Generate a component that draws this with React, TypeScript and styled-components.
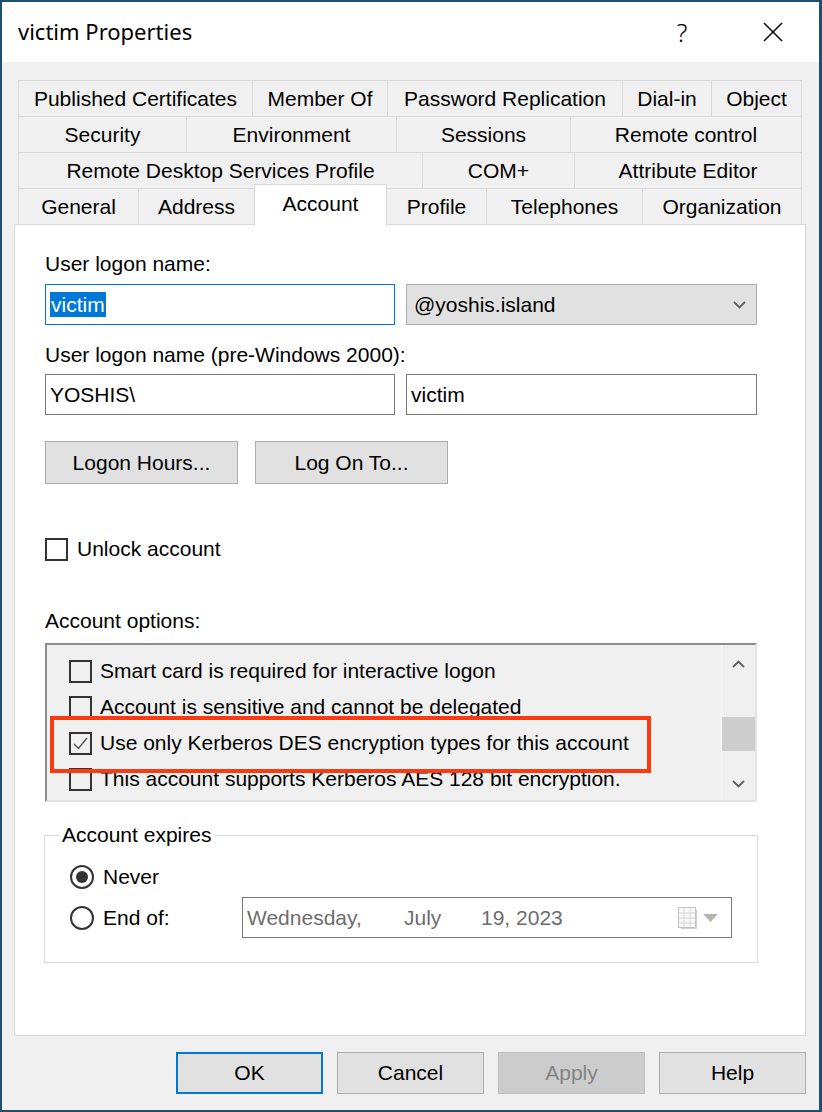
import React from "react";
import styled, { createGlobalStyle } from "styled-components";

const GlobalStyle = createGlobalStyle`
  html, body {
    margin: 0;
    padding: 0;
    background: #ffffff;
  }
  body {
    font-family: "Liberation Sans", Arial, sans-serif;
  }
`;

const Window = styled.div`
  width: 822px;
  height: 1112px;
  box-sizing: border-box;
  border: 2px solid #1d5070;
  border-right-width: 3px;
  display: flex;
  flex-direction: column;
  background: #f0f0f0;
  font-family: "Liberation Sans", Arial, sans-serif;
  font-size: 21px;
  color: #000000;
`;

const TitleBar = styled.div`
  height: 60px;
  flex-shrink: 0;
  background: #ffffff;
  display: flex;
  align-items: center;
  padding: 0 16px 0 16px;
`;

const Title = styled.div`
  flex: 1;
  font-family: "Noto Sans", "Open Sans", sans-serif;
  font-size: 22px;
  padding-bottom: 2px;
`;

const TitleButton = styled.div`
  width: 60px;
  height: 40px;
  display: flex;
  align-items: center;
  justify-content: center;
  font-family: "Noto Sans", sans-serif;
  font-weight: 300;
  font-size: 25px;
  & + & {
    margin-left: 31px;
  }
`;

const Body = styled.div`
  flex: 1;
  display: flex;
  flex-direction: column;
  padding: 18px 13px 0 12px;
`;

const TabStrip = styled.div`
  margin: 0 4px;
  display: flex;
  flex-direction: column;
`;

const TabRow = styled.div`
  display: flex;
  height: 37px;
  & + & {
    margin-top: -1px;
  }
`;

const Tab = styled.div<{ $w: number; $active?: boolean }>`
  width: ${(p) => p.$w}px;
  flex-shrink: 0;
  box-sizing: border-box;
  border: 1px solid #d9d9d9;
  background: ${(p) => (p.$active ? "#ffffff" : "#f0f0f0")};
  display: flex;
  align-items: center;
  justify-content: center;
  white-space: nowrap;
  & + & {
    margin-left: -1px;
  }
  ${(p) =>
    p.$active &&
    `
    position: relative;
    z-index: 2;
    margin-top: -4px;
    height: 42px;
    border-bottom: none;
    padding-bottom: 4px;
  `}
`;

const Panel = styled.div`
  margin-top: -1px;
  height: 812px;
  box-sizing: border-box;
  background: #ffffff;
  border: 1px solid #d9d9d9;
  padding: 27px 48px 0 30px;
  display: flex;
  flex-direction: column;
`;

const Label = styled.div<{ $mt?: number }>`
  line-height: 24px;
  margin-top: ${(p) => p.$mt ?? 0}px;
  white-space: nowrap;
`;

const FieldRow = styled.div<{ $mt: number }>`
  display: flex;
  gap: 11px;
  margin-top: ${(p) => p.$mt}px;
`;

const TextBox = styled.div<{ $focused?: boolean }>`
  width: 350px;
  height: 41px;
  flex-shrink: 0;
  box-sizing: border-box;
  border: 1px solid ${(p) => (p.$focused ? "#0078d7" : "#7a7a7a")};
  background: #ffffff;
  display: flex;
  align-items: center;
  padding-left: 4px;
`;

const Selected = styled.span`
  background: #0078d7;
  color: #ffffff;
  line-height: 25px;
  padding: 0 1px;
`;

const Combo = styled.div`
  flex: 1;
  height: 41px;
  box-sizing: border-box;
  border: 1px solid #adadad;
  background: #e1e1e1;
  display: flex;
  align-items: center;
  justify-content: space-between;
  padding: 0 10px 0 7px;
`;

const ButtonRow = styled.div`
  display: flex;
  gap: 17px;
  margin-top: 26px;
`;

const PushButton = styled.div`
  width: 193px;
  height: 43px;
  box-sizing: border-box;
  border: 1px solid #adadad;
  background: #e1e1e1;
  display: flex;
  align-items: center;
  justify-content: center;
`;

const CheckRow = styled.div<{ $mt?: number; $gap: number }>`
  display: flex;
  align-items: center;
  gap: ${(p) => p.$gap}px;
  margin-top: ${(p) => p.$mt ?? 0}px;
  white-space: nowrap;
`;

const CheckBox = styled.div`
  width: 23px;
  height: 23px;
  flex-shrink: 0;
  box-sizing: border-box;
  border: 2px solid #333333;
  display: flex;
  align-items: center;
  justify-content: center;
`;

const ListBox = styled.div`
  position: relative;
  margin-top: 10px;
  height: 159px;
  box-sizing: border-box;
  border: 2px solid;
  border-color: #8c8c8c #e3e3e3 #e3e3e3 #8c8c8c;
  background: #f0f0f0;
  display: flex;
  overflow: hidden;
`;

const ItemList = styled.div`
  flex: 1;
  display: flex;
  flex-direction: column;
  padding: 8px 0 0 22px;
`;

const Item = styled.div`
  height: 36px;
  flex-shrink: 0;
  display: flex;
  align-items: center;
  gap: 8px;
  white-space: nowrap;
`;

const ScrollBar = styled.div`
  width: 33px;
  flex-shrink: 0;
  border-left: 1px solid #ffffff;
  display: flex;
  flex-direction: column;
`;

const ArrowCell = styled.div<{ $h: number }>`
  height: ${(p) => p.$h}px;
  flex-shrink: 0;
  display: flex;
  align-items: center;
  justify-content: center;
`;

const Thumb = styled.div`
  height: 34px;
  margin-top: 34px;
  background: #cdcdcd;
`;

const Spacer = styled.div`
  flex: 1;
`;

const Highlight = styled.div`
  position: absolute;
  left: 3px;
  top: 71px;
  width: 601px;
  height: 57px;
  box-sizing: border-box;
  border: 4px solid #fa3b12;
  pointer-events: none;
`;

const GroupBox = styled.fieldset`
  margin: 21px 0 0 -1px;
  width: 714px;
  box-sizing: border-box;
  border: 1px solid #dcdcdc;
  padding: 0 0 24px 25px;
`;

const Legend = styled.legend`
  padding: 0 3px;
  margin-left: -11px;
  line-height: 24px;
`;

const RadioRow = styled.div<{ $mt: number; $h: number }>`
  display: flex;
  align-items: center;
  height: ${(p) => p.$h}px;
  margin-top: ${(p) => p.$mt}px;
  gap: 9px;
`;

const Radio = styled.div<{ $checked?: boolean }>`
  width: 24px;
  height: 24px;
  flex-shrink: 0;
  box-sizing: border-box;
  border: 2px solid #333333;
  border-radius: 50%;
  display: flex;
  align-items: center;
  justify-content: center;
  &::after {
    content: "";
    display: ${(p) => (p.$checked ? "block" : "none")};
    width: 12px;
    height: 12px;
    border-radius: 50%;
    background: #333333;
  }
`;

const RadioLabel = styled.span<{ $w?: number }>`
  width: ${(p) => (p.$w ? `${p.$w}px` : "auto")};
  flex-shrink: 0;
`;

const DatePicker = styled.div`
  width: 490px;
  height: 41px;
  box-sizing: border-box;
  border: 1px solid #7a7a7a;
  background: #ffffff;
  color: #6d6d6d;
  display: flex;
  align-items: center;
  padding: 0 13px 0 4px;
  white-space: nowrap;
`;

const DateSeg = styled.span<{ $w?: number }>`
  width: ${(p) => (p.$w ? `${p.$w}px` : "auto")};
  flex-shrink: 0;
`;

const DateIcons = styled.div`
  margin-left: auto;
  display: flex;
  align-items: center;
  gap: 6px;
`;

const Footer = styled.div`
  display: flex;
  justify-content: flex-end;
  gap: 14px;
  margin-top: 16px;
`;

const DialogButton = styled.div<{ $primary?: boolean; $disabled?: boolean }>`
  width: 147px;
  height: 42px;
  box-sizing: border-box;
  border: ${(p) => (p.$primary ? "2px solid #0078d7" : `1px solid ${p.$disabled ? "#bfbfbf" : "#adadad"}`)};
  background: ${(p) => (p.$disabled ? "#cccccc" : "#e1e1e1")};
  color: ${(p) => (p.$disabled ? "#838383" : "#000000")};
  display: flex;
  align-items: center;
  justify-content: center;
`;

const tabRows: { label: string; w: number; active?: boolean }[][] = [
  [
    { label: "Published Certificates", w: 235 },
    { label: "Member Of", w: 136 },
    { label: "Password Replication", w: 236 },
    { label: "Dial-in", w: 90 },
    { label: "Object", w: 91 },
  ],
  [
    { label: "Security", w: 169 },
    { label: "Environment", w: 211 },
    { label: "Sessions", w: 175 },
    { label: "Remote control", w: 232 },
  ],
  [
    { label: "Remote Desktop Services Profile", w: 405 },
    { label: "COM+", w: 153 },
    { label: "Attribute Editor", w: 228 },
  ],
  [
    { label: "General", w: 121 },
    { label: "Address", w: 117 },
    { label: "Account", w: 133, active: true },
    { label: "Profile", w: 101 },
    { label: "Telephones", w: 157 },
    { label: "Organization", w: 160 },
  ],
];

const accountOptions = [
  { label: "Smart card is required for interactive logon", checked: false },
  { label: "Account is sensitive and cannot be delegated", checked: false },
  { label: "Use only Kerberos DES encryption types for this account", checked: true },
  { label: "This account supports Kerberos AES 128 bit encryption.", checked: false },
];

const Chevron = ({ up }: { up?: boolean }) => (
  <svg width="13" height="8" viewBox="0 0 13 8">
    <polyline
      points={up ? "1,7 6.5,1.5 12,7" : "1,1 6.5,6.5 12,1"}
      fill="none"
      stroke="#606060"
      strokeWidth="1.8"
    />
  </svg>
);

const CheckMark = () => (
  <svg width="19" height="19" viewBox="0 0 19 19">
    <polyline points="3,10 7.5,14.5 16,4" fill="none" stroke="#555555" strokeWidth="1.4" />
  </svg>
);

const CalendarIcon = () => (
  <svg width="19" height="22" viewBox="0 0 19 22">
    <rect x="0.5" y="0.5" width="17" height="20" fill="#f8f8f8" stroke="#c4c4c4" />
    <line x1="1" y1="6" x2="17" y2="6" stroke="#d6d6d6" />
    <line x1="1" y1="11" x2="17" y2="11" stroke="#d6d6d6" />
    <line x1="1" y1="16" x2="17" y2="16" stroke="#d6d6d6" />
    <line x1="6" y1="1" x2="6" y2="20" stroke="#d6d6d6" />
    <line x1="12" y1="1" x2="12" y2="20" stroke="#d6d6d6" />
    <polyline points="18.5,3 18.5,21.5 3,21.5" fill="none" stroke="#d0d0d0" />
  </svg>
);

const DropTriangle = () => (
  <svg width="15" height="8" viewBox="0 0 15 8">
    <polygon points="0,0 15,0 7.5,8" fill="#b4b4aa" />
  </svg>
);

const App = () => {
  return (
    <>
      <GlobalStyle />
      <Window>
        <TitleBar>
          <Title>victim Properties</Title>
          <TitleButton>?</TitleButton>
          <TitleButton>
            <svg width="20" height="20" viewBox="0 0 20 20">
              <line x1="1" y1="1" x2="19" y2="19" stroke="#000" strokeWidth="1.5" />
              <line x1="19" y1="1" x2="1" y2="19" stroke="#000" strokeWidth="1.5" />
            </svg>
          </TitleButton>
        </TitleBar>
        <Body>
          <TabStrip>
            {tabRows.map((row, i) => (
              <TabRow key={i}>
                {row.map((t) => (
                  <Tab key={t.label} $w={t.w} $active={t.active}>
                    {t.label}
                  </Tab>
                ))}
              </TabRow>
            ))}
          </TabStrip>
          <Panel>
            <Label>User logon name:</Label>
            <FieldRow $mt={8}>
              <TextBox $focused>
                <Selected>victim</Selected>
              </TextBox>
              <Combo>
                <span>@yoshis.island</span>
                <Chevron />
              </Combo>
            </FieldRow>
            <Label $mt={18}>User logon name (pre-Windows 2000):</Label>
            <FieldRow $mt={7}>
              <TextBox>YOSHIS\</TextBox>
              <TextBox style={{ flex: 1 }}>victim</TextBox>
            </FieldRow>
            <ButtonRow>
              <PushButton>Logon Hours...</PushButton>
              <PushButton>Log On To...</PushButton>
            </ButtonRow>
            <CheckRow $mt={53} $gap={9}>
              <CheckBox />
              <span>Unlock account</span>
            </CheckRow>
            <Label $mt={48}>Account options:</Label>
            <ListBox>
              <ItemList>
                {accountOptions.map((o) => (
                  <Item key={o.label}>
                    <CheckBox>{o.checked && <CheckMark />}</CheckBox>
                    <span>{o.label}</span>
                  </Item>
                ))}
              </ItemList>
              <ScrollBar>
                <ArrowCell $h={38}>
                  <Chevron up />
                </ArrowCell>
                <Thumb />
                <Spacer />
                <ArrowCell $h={32}>
                  <Chevron />
                </ArrowCell>
              </ScrollBar>
              <Highlight />
            </ListBox>
            <GroupBox>
              <Legend>Account expires</Legend>
              <RadioRow $mt={16} $h={28}>
                <Radio $checked />
                <RadioLabel>Never</RadioLabel>
              </RadioRow>
              <RadioRow $mt={6} $h={41}>
                <Radio />
                <RadioLabel $w={130}>End of:</RadioLabel>
                <DatePicker>
                  <DateSeg $w={157}>Wednesday,</DateSeg>
                  <DateSeg $w={77}>July</DateSeg>
                  <DateSeg>19, 2023</DateSeg>
                  <DateIcons>
                    <CalendarIcon />
                    <DropTriangle />
                  </DateIcons>
                </DatePicker>
              </RadioRow>
            </GroupBox>
          </Panel>
          <Footer>
            <DialogButton $primary>OK</DialogButton>
            <DialogButton>Cancel</DialogButton>
            <DialogButton $disabled>Apply</DialogButton>
            <DialogButton>Help</DialogButton>
          </Footer>
        </Body>
      </Window>
    </>
  );
};

export default App;
